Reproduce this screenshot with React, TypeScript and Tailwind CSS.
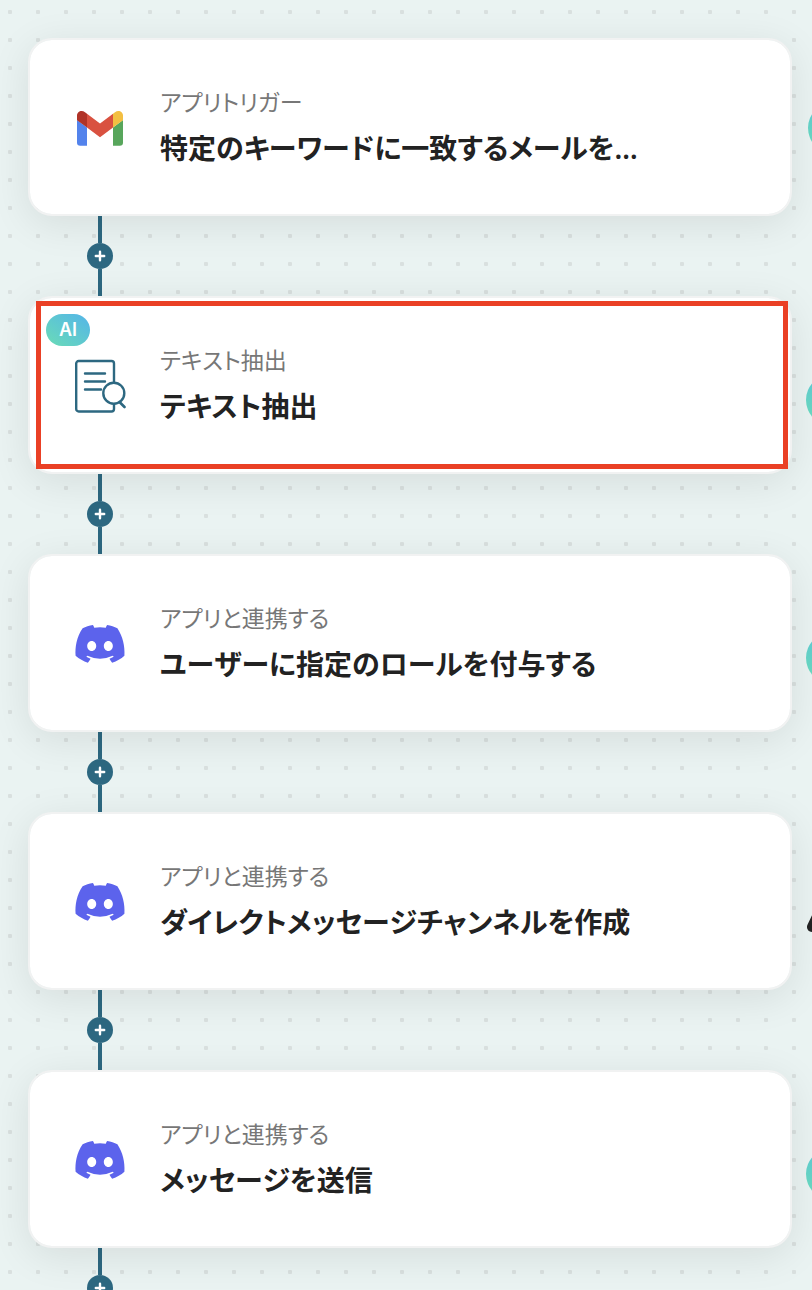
import type { ReactNode } from 'react';

type Step = {
  id: number;
  label: string;
  title: string;
  icon: ReactNode;
  ai?: boolean;
  selected?: boolean;
  marker?: ReactNode;
};

function GmailIcon() {
  return (
    <svg viewBox="0 0 48 36" className="w-12 h-9" aria-hidden="true">
      <path d="M1 10v22.500a3.200 3.200 0 0 0 3.200 3.200H11V17.500z" fill="#5383ec" />
      <path d="M37 17.500v18.200h6.800a3.200 3.200 0 0 0 3.200-3.200V10z" fill="#58a65c" />
      <path d="M11 3.800 24 13.600 37 3.800v13.700L24 27.300 11 17.500z" fill="#d95140" />
      <path d="M1 10.300V5.500C1 1.400 5.700-.6 9 2.200l2 1.600v13.700z" fill="#b03328" />
      <path d="M47 10.300V5.500c0-4.100-4.700-6.100-8-3.300l-2 1.600v13.700z" fill="#f3bf42" />
    </svg>
  );
}

function DiscordIcon() {
  return (
    <svg viewBox="0 0 127 96" className="w-[50px] h-[38px]" aria-hidden="true">
      <path
        fill="#5c63ec"
        d="M107.700 8.070C100 4.500 91 1.500 81.470 0a72.060 72.060 0 0 0-3.360 6.830 97.680 97.680 0 0 0-29.110 0A72.370 72.370 0 0 0 45.640 0C36 1.500 27 4.500 19.390 8.090 4 30 0 56 1.500 78c9 8 20 14 31.210 17.500a77.700 77.700 0 0 0 6.890-10.250 68.420 68.420 0 0 1-10.850-5.180c.91-.66 1.800-1.340 2.660-2a75.570 75.570 0 0 0 64.320 0c.87.71 1.760 1.390 2.660 2a68.680 68.680 0 0 1-10.870 5.190 77 77 0 0 0 6.890 10.240C106 92 117 86 125.500 78c1.500-25-4-49-17.800-69.930ZM42.450 65.690C36.180 65.690 31 60 31 53s5-12.740 11.430-12.740S54 46 53.890 53s-5.050 12.690-11.440 12.690Zm42.240 0C78.410 65.690 73.250 60 73.250 53s5-12.740 11.440-12.740S96.230 46 96.120 53s-5.040 12.690-11.430 12.690Z"
      />
    </svg>
  );
}

function ExtractIcon() {
  return (
    <svg
      viewBox="0 0 52 54"
      className="w-[52px] h-[54px]"
      fill="none"
      stroke="#2d6881"
      strokeWidth="2.400"
      strokeLinecap="round"
      aria-hidden="true"
    >
      <rect x="2.200" y="2" width="37.800" height="50.500" rx="2.500" />
      <path d="M11 14.500h20M11 22.500h20M11 30.500h16" />
      <path d="M46 43.500l4.500 4.500" strokeWidth="2.600" />
      <circle cx="39.800" cy="34.200" r="10.500" fill="#fff" />
    </svg>
  );
}

function Marker({ className }: { className: string }) {
  return (
    <span
      className={`absolute left-full size-13 rounded-full bg-linear-to-tr from-[#6bdbb5] to-[#55b4e8] ${className}`}
    />
  );
}

const steps: Step[] = [
  {
    id: 1,
    label: 'アプリトリガー',
    title: '特定のキーワードに一致するメールを…',
    icon: <GmailIcon />,
    marker: <Marker className="top-15.5 ml-4.5" />,
  },
  {
    id: 2,
    label: 'テキスト抽出',
    title: 'テキスト抽出',
    icon: <ExtractIcon />,
    ai: true,
    selected: true,
    marker: <Marker className="top-19 ml-4" />,
  },
  {
    id: 3,
    label: 'アプリと連携する',
    title: 'ユーザーに指定のロールを付与する',
    icon: <DiscordIcon />,
    marker: <Marker className="top-19 ml-4" />,
  },
  {
    id: 4,
    label: 'アプリと連携する',
    title: 'ダイレクトメッセージチャンネルを作成',
    icon: <DiscordIcon />,
    marker: (
      <svg
        viewBox="0 0 24 24"
        className="absolute left-full top-24 ml-4 size-6"
        stroke="#222"
        strokeWidth="10"
        strokeLinecap="round"
        aria-hidden="true"
      >
        <path d="M6 17 14 0" />
      </svg>
    ),
  },
  {
    id: 5,
    label: 'アプリと連携する',
    title: 'メッセージを送信',
    icon: <DiscordIcon />,
    marker: <Marker className="top-19 ml-4" />,
  },
];

function StepCard({ step }: { step: Step }) {
  return (
    <article className="relative min-h-[178px] flex items-center rounded-3xl border-2 border-[#f1f2f2] bg-white bg-clip-padding shadow-[0_8px_40px_rgba(0,0,0,0.09)]">
      <div className="w-35 pt-0.5 shrink-0 flex justify-center">{step.icon}</div>
      <div className="min-w-0 flex-1 -ml-2.5">
        <p className="text-[23px] leading-8 text-[#777]">{step.label}</p>
        <h2 className="mt-2.5 text-[28px] leading-10 font-semibold text-[#222]">
          {step.title}
        </h2>
      </div>
      {step.selected && (
        <div className="absolute left-1.5 right-0.5 inset-y-[3px] border-5 border-[#ea4025]" />
      )}
      {step.ai && (
        <span className="absolute left-4 top-4 w-11 h-8 flex items-center justify-center rounded-full bg-linear-to-tr from-[#6bdbb5] to-[#55b4e8] text-lg font-semibold text-white font-['Inter',sans-serif]">
          AI
        </span>
      )}
      {step.marker}
    </article>
  );
}

function Connector() {
  return (
    <div className="h-20 w-36 flex flex-col items-center">
      <div className="w-1 flex-1 bg-[#2d6881]" />
      <button
        type="button"
        aria-label="ステップを追加"
        className="size-[26px] flex items-center justify-center rounded-full bg-[#2d6881]"
      >
        <svg
          viewBox="0 0 12 12"
          className="size-3"
          stroke="#fff"
          strokeWidth="2.400"
          strokeLinecap="round"
          aria-hidden="true"
        >
          <path d="M6 1.800v8.400M1.800 6h8.400" />
        </svg>
      </button>
      <div className="w-1 flex-1 bg-[#2d6881]" />
    </div>
  );
}

export default function App() {
  return (
    <main className="h-screen overflow-hidden bg-[#eaf3f2] bg-[radial-gradient(circle,#d9e0df_2px,transparent_2.500px)] bg-size-[28px_28px] bg-position-[-4px_-2px] pt-[38px] pl-7 pr-5 font-['Noto_Sans','Noto_Sans_CJK_JP',sans-serif] [font-feature-settings:'palt'] [font-kerning:none]">
      <ol>
        {steps.map((step) => (
          <li key={step.id}>
            <StepCard step={step} />
            <Connector />
          </li>
        ))}
      </ol>
    </main>
  );
}
